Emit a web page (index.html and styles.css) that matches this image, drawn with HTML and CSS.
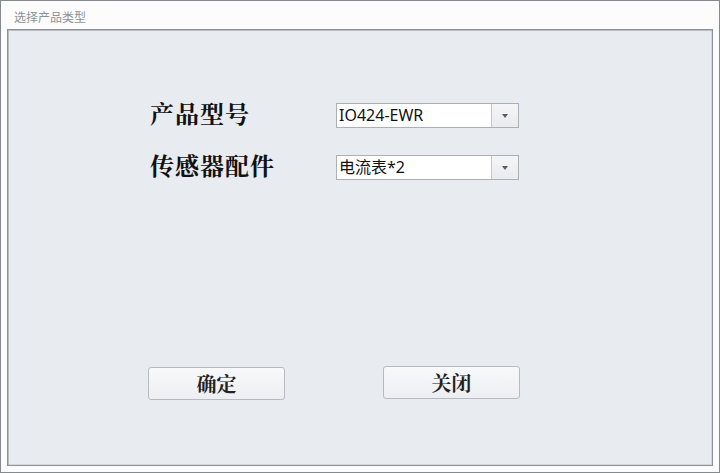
FILE: index.html
```html
<!DOCTYPE html>
<html lang="zh-CN">
<head>
<meta charset="utf-8">
<title>选择产品类型</title>
<link rel="stylesheet" href="styles.css">
</head>
<body>
<div class="window">
  <div class="titlebar">选择产品类型</div>
  <div class="panel">
    <div class="form">
      <div class="row">
        <div class="label">产品型号</div>
        <div class="combo">
          <div class="combo-text">IO424-EWR</div>
          <div class="combo-btn"><span class="arrow"></span></div>
        </div>
      </div>
      <div class="row">
        <div class="label">传感器配件</div>
        <div class="combo">
          <div class="combo-text">电流表*2</div>
          <div class="combo-btn"><span class="arrow"></span></div>
        </div>
      </div>
    </div>
    <div class="actions">
      <button class="btn btn-ok">确定</button>
      <button class="btn btn-close">关闭</button>
    </div>
  </div>
</div>
</body>
</html>
```
FILE: styles.css
```css
html, body {
  margin: 0;
  padding: 0;
  background: #fcfcfc;
}
.window {
  width: 720px;
  height: 473px;
  box-sizing: border-box;
  border: 1px solid #868a8f;
  background: #fcfcfc;
  display: flex;
  flex-direction: column;
  padding: 0 6px 6px 6px;
}
.titlebar {
  height: 28px;
  box-sizing: border-box;
  padding: 8px 0 0 7px;
  font-family: "Noto Sans CJK SC", sans-serif;
  font-size: 12px;
  line-height: 16px;
  color: #8d9197;
}
.panel {
  flex: 1;
  box-sizing: border-box;
  border: 1px solid #8e9297;
  box-shadow: inset 1px 1px 0 #b8bcc1, inset -1px -1px 0 #d3d6da;
  background: #e8ebef;
  padding: 73px 0 0 142px;
  display: flex;
  flex-direction: column;
}
.form {
  display: flex;
  flex-direction: column;
  gap: 27px;
}
.row {
  display: flex;
  align-items: center;
  height: 25px;
}
.label {
  width: 186px;
  font-family: "Noto Serif CJK SC", "Noto Sans CJK SC", serif;
  font-weight: 700;
  font-size: 24px;
  line-height: 25px;
  letter-spacing: 1px;
  color: #111;
  margin-top: -6px;
}
.combo {
  width: 183px;
  height: 25px;
  box-sizing: border-box;
  border: 1px solid #abb0b6;
  background: #fff;
  display: flex;
}
.combo-text {
  flex: 1;
  padding-left: 2px;
  font-family: "Noto Sans", "Noto Sans CJK SC", sans-serif;
  font-size: 16px;
  line-height: 23px;
  color: #111;
}
.combo-btn {
  width: 26px;
  border-left: 1px solid #c3c7cc;
  background: linear-gradient(#f4f5f7, #e9ebee);
  display: flex;
  align-items: center;
  justify-content: center;
}
.arrow {
  width: 0;
  height: 0;
  border-left: 3.5px solid transparent;
  border-right: 3.5px solid transparent;
  border-top: 4px solid #5a5d61;
  margin-top: 1px;
}
.actions {
  display: flex;
  align-items: flex-start;
  gap: 98px;
  margin-top: 186px;
  margin-left: -2px;
}
.btn {
  width: 137px;
  height: 33px;
  box-sizing: border-box;
  border: 1px solid #b7bbc1;
  border-radius: 3px;
  background: linear-gradient(#f8f9fb, #eceef1);
  font-family: "Noto Serif CJK SC", "Noto Sans CJK SC", serif;
  font-weight: 700;
  font-size: 20px;
  line-height: 29px;
  color: #222;
  padding: 0;
  margin: 0;
}
.btn-ok {
  margin-top: 1px;
}
```
